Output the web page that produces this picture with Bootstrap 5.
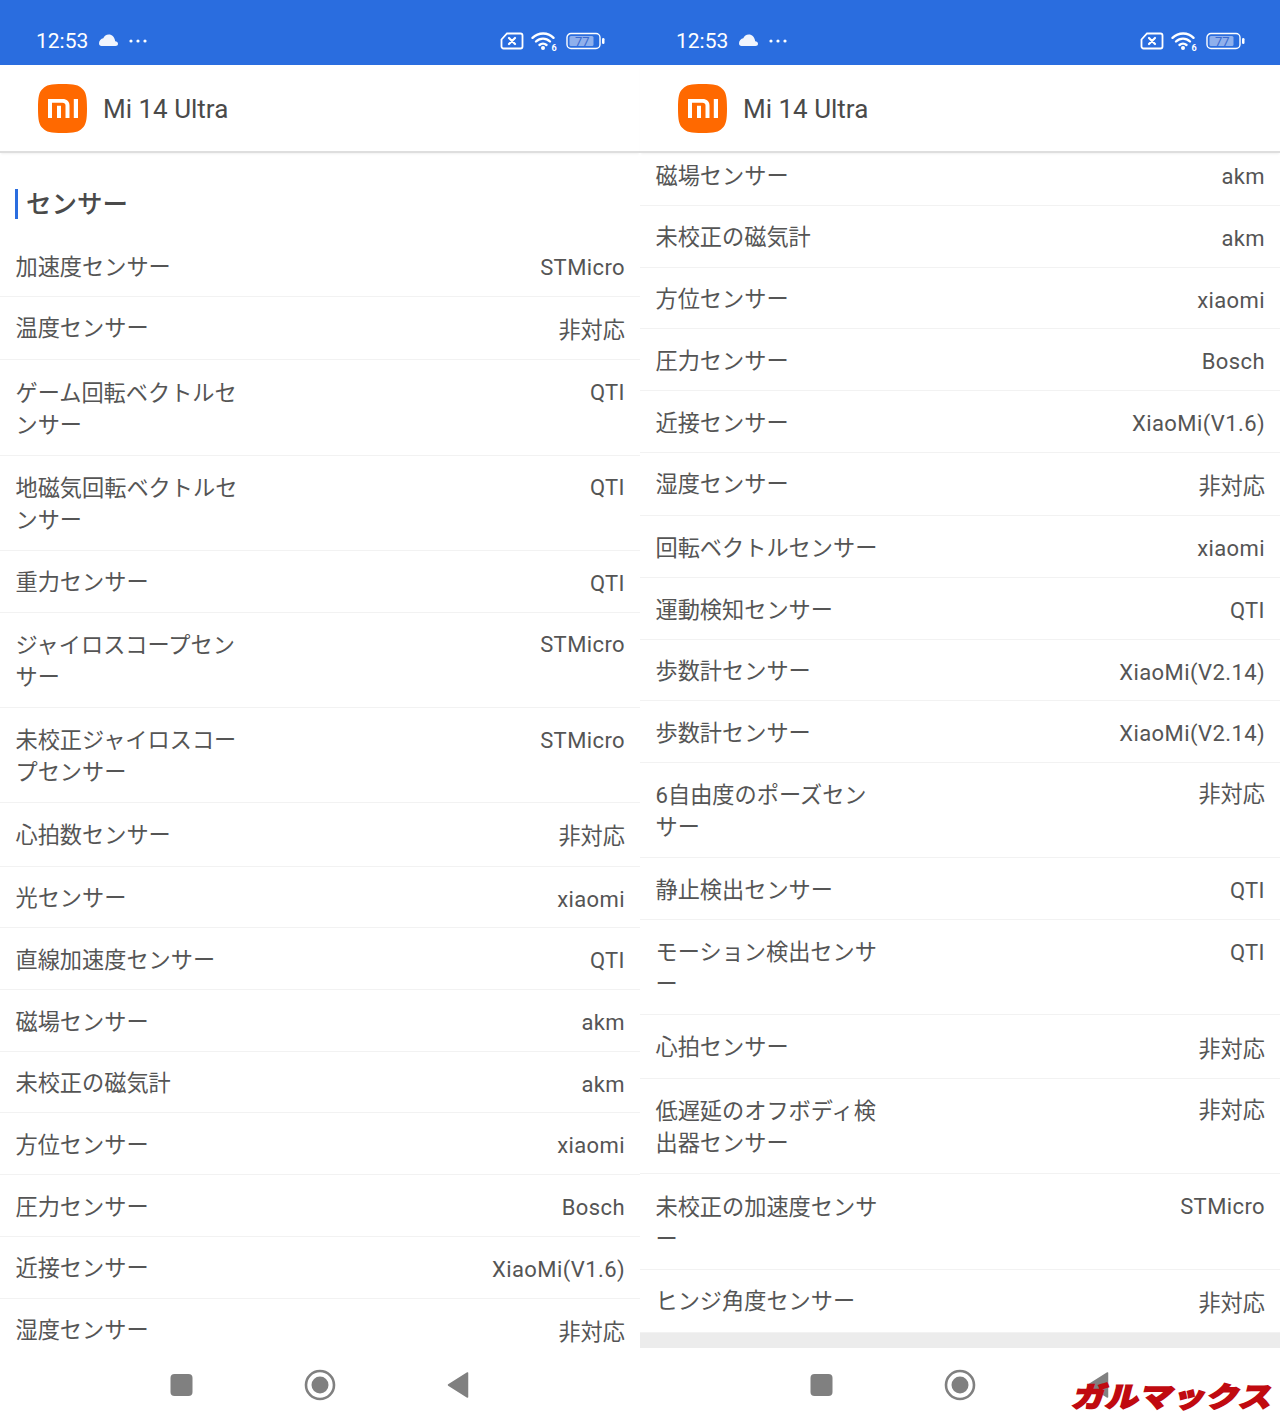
<!doctype html>
<html lang="ja">
<head>
<meta charset="utf-8">
<title>Mi 14 Ultra</title>
<link rel="stylesheet" href="https://cdn.jsdelivr.net/npm/bootstrap@5.3.0/dist/css/bootstrap.min.css">
<style>
html,body{height:1422px;overflow:hidden;background:#fff}
body{font-family:Roboto,"Noto Sans CJK JP",sans-serif;color:#555}
.shot{height:1422px;position:relative}
.panel{width:640px;height:1422px}
.sbar{height:65px;background:#2a6ddf;color:#fff;font-size:21px;line-height:24px;padding:17px 35px 0 36px;flex:none}
.sbar svg{display:block}
.sicons{gap:8px}
.sicons .sim{margin-right:-1px;margin-left:1px}
.cloud{margin-left:11px;margin-top:-3px}
.dots{margin-left:11px}
.abar{height:88px;padding-left:38px;flex:none;gap:16px;font-size:26px;color:#4a4a4a;background:#fff;border-bottom:2px solid #dedede;box-shadow:0 2px 2px -1px rgba(0,0,0,.06);position:relative;z-index:2}
.abar span{padding-top:2px}
.scroller{flex:1 1 0;min-height:0;overflow:hidden}
.sect{padding:36px 15px 16px;font-size:25.5px;font-weight:500;color:#4a4a4a}
.sect span{display:block;border-left:3px solid #2a6ddf;padding-left:8px;line-height:30px}
.srow{padding:16.500px 15px 12.800px 15.500px;border-bottom:1px solid #f2f2f2;font-size:22.200px;justify-content:space-between;flex:none}
.srow .lbl{width:228px;line-height:31.400px}
.srow .val{line-height:28px;margin-top:2.500px;white-space:nowrap;letter-spacing:.4px;font-size:22px}
.srow .val.ja{line-height:31.400px;margin-top:1.800px;letter-spacing:0;font-size:22.200px}
.srow.two{padding-top:16.300px;padding-bottom:14px}
.srow.two .lbl{line-height:32px}
.srow.two .val{margin-top:2.500px}
.srow.two .val.ja{margin-top:0}
.foot{height:15px;background:#ececec;flex:none}
.nbar{height:74px;flex:none;background:#fff;position:relative;z-index:2;gap:106px}
.nbar .ni{width:32px;height:34px;flex:none}
.gmark{position:absolute;right:6px;bottom:10px;font-family:"Noto Sans CJK JP",sans-serif;font-weight:900;font-size:33px;line-height:34px;letter-spacing:.5px;color:#c00a10;transform:skewX(-14deg) scaleY(.85);-webkit-text-stroke:1.800px #c00a10;white-space:nowrap;z-index:3}
</style>
</head>
<body>
<div class="shot d-flex">

<section class="panel d-flex flex-column">
  <div class="sbar d-flex justify-content-between">
    <div class="d-flex align-items-center">
      <span>12:53</span>
      <svg class="cloud" width="19" height="12" viewBox="0 0 19 12"><path fill="#f1f5fd" d="M2.500 12h14c1.500 0 2.500-1 2.500-2.300 0-1.500-1.200-2.500-2.800-2.500C15.700 3 13 .5 9.800.5 7.200.5 5.200 2 4.300 4.200 2 4.500 0 6.800 0 9.200 0 11 1 12 2.500 12z"/></svg>
      <svg class="dots" width="18" height="6" viewBox="0 0 18 6"><g fill="#fff"><circle cx="2" cy="3" r="1.600"/><circle cx="9" cy="3" r="1.600"/><circle cx="16" cy="3" r="1.600"/></g></svg>
    </div>
    <div class="sicons d-flex align-items-center">
      <svg class="sim" width="24" height="18" viewBox="0 0 24 18"><path fill="none" stroke="#fff" stroke-width="1.800" d="M7 1.500h13.500a2 2 0 0 1 2 2v11a2 2 0 0 1-2 2H3.500a2 2 0 0 1-2-2V7.500z"/><path stroke="#fff" stroke-width="2.200" stroke-linecap="round" d="M9 6l6 6M15 6l-6 6"/></svg>
      <svg width="27" height="20" viewBox="0 0 27 20"><g fill="none" stroke="#fff" stroke-width="2.400" stroke-linecap="round"><path d="M1.500 6.800C7.500 1 17 1 22.500 6.800"/><path d="M5 10.500c4-3.800 10-3.800 14 0"/><path d="M8.500 14c2-1.700 5-1.700 7 0"/></g><circle cx="12" cy="17" r="2" fill="#fff"/><text x="20.500" y="19.500" font-size="9" font-weight="700" fill="#fff" font-family="Roboto,sans-serif">6</text></svg>
      <svg width="39" height="18" viewBox="0 0 39 18"><rect x="1" y="1.500" width="33" height="15" rx="4" fill="none" stroke="#fff" stroke-width="1.400"/><rect x="3.500" y="4" width="24" height="10" rx="1.500" fill="#8fb0ec"/><rect x="36" y="6" width="2.500" height="6" rx="1.200" fill="#fff"/><text x="9" y="13.800" font-size="13" fill="#3a6bd0" font-family="Roboto,sans-serif">77</text></svg>
    </div>
  </div>
  <div class="abar d-flex align-items-center">
    <svg width="49" height="49" viewBox="0 0 49 49"><path fill="#ff6900" d="M24.500 0C36 0 41 1 44.200 4.800 48 8 49 13 49 24.500S48 41 44.200 44.200C41 48 36 49 24.500 49S8 48 4.800 44.200C1 41 0 36 0 24.500S1 8 4.800 4.800C8 1 13 0 24.500 0z"/><path fill="#fff" d="M10 15h14.500c4.500 0 7 2.500 7 6.500V34h-4V21.500c0-1.800-1.200-2.800-3-2.800H14V34h-4zM19 21.800h4V34h-4zM35.800 15H40v19h-4.200z"/></svg>
    <span>Mi 14 Ultra</span>
  </div>
  <div class="scroller d-flex flex-column">
    <div class="sect"><span>センサー</span></div>
    <div class="srow d-flex"><div class="lbl">加速度センサー</div><div class="val">STMicro</div></div>
    <div class="srow d-flex"><div class="lbl">温度センサー</div><div class="val ja">非対応</div></div>
    <div class="srow two d-flex"><div class="lbl">ゲーム回転ベクトルセンサー</div><div class="val">QTI</div></div>
    <div class="srow two d-flex"><div class="lbl">地磁気回転ベクトルセンサー</div><div class="val">QTI</div></div>
    <div class="srow d-flex"><div class="lbl">重力センサー</div><div class="val">QTI</div></div>
    <div class="srow two d-flex"><div class="lbl">ジャイロスコープセンサー</div><div class="val">STMicro</div></div>
    <div class="srow two d-flex"><div class="lbl">未校正ジャイロスコープセンサー</div><div class="val">STMicro</div></div>
    <div class="srow d-flex"><div class="lbl">心拍数センサー</div><div class="val ja">非対応</div></div>
    <div class="srow d-flex"><div class="lbl">光センサー</div><div class="val">xiaomi</div></div>
    <div class="srow d-flex"><div class="lbl">直線加速度センサー</div><div class="val">QTI</div></div>
    <div class="srow d-flex"><div class="lbl">磁場センサー</div><div class="val">akm</div></div>
    <div class="srow d-flex"><div class="lbl">未校正の磁気計</div><div class="val">akm</div></div>
    <div class="srow d-flex"><div class="lbl">方位センサー</div><div class="val">xiaomi</div></div>
    <div class="srow d-flex"><div class="lbl">圧力センサー</div><div class="val">Bosch</div></div>
    <div class="srow d-flex"><div class="lbl">近接センサー</div><div class="val">XiaoMi(V1.6)</div></div>
    <div class="srow d-flex"><div class="lbl">湿度センサー</div><div class="val ja">非対応</div></div>
  </div>
  <div class="nbar d-flex align-items-center justify-content-center">
    <svg class="ni" viewBox="0 0 32 34"><rect x="4.500" y="6" width="22" height="22" rx="4" fill="#808080"/></svg>
    <svg class="ni" viewBox="0 0 32 34"><circle cx="16" cy="17" r="14" fill="none" stroke="#808080" stroke-width="2.600"/><circle cx="16" cy="17" r="8.500" fill="#808080"/></svg>
    <svg class="ni" viewBox="0 0 32 34"><path fill="#808080" stroke="#808080" stroke-width="1.500" stroke-linejoin="round" d="M25.500 5v24L6.500 17z"/></svg>
  </div>
</section>

<section class="panel d-flex flex-column position-relative">
  <div class="sbar d-flex justify-content-between">
    <div class="d-flex align-items-center">
      <span>12:53</span>
      <svg class="cloud" width="19" height="12" viewBox="0 0 19 12"><path fill="#f1f5fd" d="M2.500 12h14c1.500 0 2.500-1 2.500-2.300 0-1.500-1.200-2.500-2.800-2.500C15.700 3 13 .5 9.800.5 7.200.5 5.200 2 4.300 4.200 2 4.500 0 6.800 0 9.200 0 11 1 12 2.500 12z"/></svg>
      <svg class="dots" width="18" height="6" viewBox="0 0 18 6"><g fill="#fff"><circle cx="2" cy="3" r="1.600"/><circle cx="9" cy="3" r="1.600"/><circle cx="16" cy="3" r="1.600"/></g></svg>
    </div>
    <div class="sicons d-flex align-items-center">
      <svg class="sim" width="24" height="18" viewBox="0 0 24 18"><path fill="none" stroke="#fff" stroke-width="1.800" d="M7 1.500h13.500a2 2 0 0 1 2 2v11a2 2 0 0 1-2 2H3.500a2 2 0 0 1-2-2V7.500z"/><path stroke="#fff" stroke-width="2.200" stroke-linecap="round" d="M9 6l6 6M15 6l-6 6"/></svg>
      <svg width="27" height="20" viewBox="0 0 27 20"><g fill="none" stroke="#fff" stroke-width="2.400" stroke-linecap="round"><path d="M1.500 6.800C7.500 1 17 1 22.500 6.800"/><path d="M5 10.500c4-3.800 10-3.800 14 0"/><path d="M8.500 14c2-1.700 5-1.700 7 0"/></g><circle cx="12" cy="17" r="2" fill="#fff"/><text x="20.500" y="19.500" font-size="9" font-weight="700" fill="#fff" font-family="Roboto,sans-serif">6</text></svg>
      <svg width="39" height="18" viewBox="0 0 39 18"><rect x="1" y="1.500" width="33" height="15" rx="4" fill="none" stroke="#fff" stroke-width="1.400"/><rect x="3.500" y="4" width="24" height="10" rx="1.500" fill="#8fb0ec"/><rect x="36" y="6" width="2.500" height="6" rx="1.200" fill="#fff"/><text x="9" y="13.800" font-size="13" fill="#3a6bd0" font-family="Roboto,sans-serif">77</text></svg>
    </div>
  </div>
  <div class="abar d-flex align-items-center">
    <svg width="49" height="49" viewBox="0 0 49 49"><path fill="#ff6900" d="M24.500 0C36 0 41 1 44.200 4.800 48 8 49 13 49 24.500S48 41 44.200 44.200C41 48 36 49 24.500 49S8 48 4.800 44.200C1 41 0 36 0 24.500S1 8 4.800 4.800C8 1 13 0 24.500 0z"/><path fill="#fff" d="M10 15h14.500c4.500 0 7 2.500 7 6.500V34h-4V21.500c0-1.800-1.200-2.800-3-2.800H14V34h-4zM19 21.800h4V34h-4zM35.800 15H40v19h-4.200z"/></svg>
    <span>Mi 14 Ultra</span>
  </div>
  <div class="scroller d-flex flex-column justify-content-end">
    <div class="srow d-flex"><div class="lbl">磁場センサー</div><div class="val">akm</div></div>
    <div class="srow d-flex"><div class="lbl">未校正の磁気計</div><div class="val">akm</div></div>
    <div class="srow d-flex"><div class="lbl">方位センサー</div><div class="val">xiaomi</div></div>
    <div class="srow d-flex"><div class="lbl">圧力センサー</div><div class="val">Bosch</div></div>
    <div class="srow d-flex"><div class="lbl">近接センサー</div><div class="val">XiaoMi(V1.6)</div></div>
    <div class="srow d-flex"><div class="lbl">湿度センサー</div><div class="val ja">非対応</div></div>
    <div class="srow d-flex"><div class="lbl">回転ベクトルセンサー</div><div class="val">xiaomi</div></div>
    <div class="srow d-flex"><div class="lbl">運動検知センサー</div><div class="val">QTI</div></div>
    <div class="srow d-flex"><div class="lbl">歩数計センサー</div><div class="val">XiaoMi(V2.14)</div></div>
    <div class="srow d-flex"><div class="lbl">歩数計センサー</div><div class="val">XiaoMi(V2.14)</div></div>
    <div class="srow two d-flex"><div class="lbl">6自由度のポーズセンサー</div><div class="val ja">非対応</div></div>
    <div class="srow d-flex"><div class="lbl">静止検出センサー</div><div class="val">QTI</div></div>
    <div class="srow two d-flex"><div class="lbl">モーション検出センサー</div><div class="val">QTI</div></div>
    <div class="srow d-flex"><div class="lbl">心拍センサー</div><div class="val ja">非対応</div></div>
    <div class="srow two d-flex"><div class="lbl">低遅延のオフボディ検出器センサー</div><div class="val ja">非対応</div></div>
    <div class="srow two d-flex"><div class="lbl">未校正の加速度センサー</div><div class="val">STMicro</div></div>
    <div class="srow d-flex"><div class="lbl">ヒンジ角度センサー</div><div class="val ja">非対応</div></div>
    <div class="foot"></div>
  </div>
  <div class="nbar d-flex align-items-center justify-content-center">
    <svg class="ni" viewBox="0 0 32 34"><rect x="4.500" y="6" width="22" height="22" rx="4" fill="#808080"/></svg>
    <svg class="ni" viewBox="0 0 32 34"><circle cx="16" cy="17" r="14" fill="none" stroke="#808080" stroke-width="2.600"/><circle cx="16" cy="17" r="8.500" fill="#808080"/></svg>
    <svg class="ni" viewBox="0 0 32 34"><path fill="#808080" stroke="#808080" stroke-width="1.500" stroke-linejoin="round" d="M25.500 5v24L6.500 17z"/></svg>
  </div>
  <div class="gmark">ガルマックス</div>
</section>

</div>
<script src="https://cdn.jsdelivr.net/npm/bootstrap@5.3.0/dist/js/bootstrap.bundle.min.js"></script>
</body>
</html>
